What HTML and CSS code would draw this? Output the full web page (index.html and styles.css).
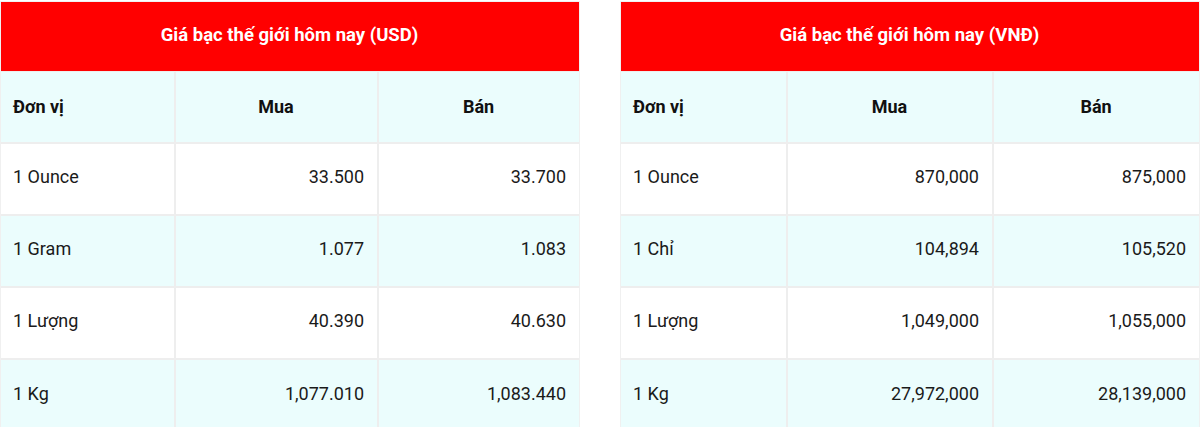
FILE: index.html
```html
<!DOCTYPE html>
<html lang="vi">
<head>
<meta charset="utf-8">
<title>Giá bạc</title>
<link rel="stylesheet" href="styles.css">
</head>
<body>
<div class="wrap">
  <table class="price usd">
    <colgroup><col class="c1"><col class="c2"><col class="c3"></colgroup>
    <thead>
      <tr><th class="title" colspan="3">Giá bạc thế giới hôm nay (USD)</th></tr>
      <tr class="head"><th class="left">Đơn vị</th><th>Mua</th><th class="last">Bán</th></tr>
    </thead>
    <tbody>
      <tr><td>1 Ounce</td><td class="num">33.500</td><td class="num last">33.700</td></tr>
      <tr class="alt"><td>1 Gram</td><td class="num">1.077</td><td class="num last">1.083</td></tr>
      <tr><td>1 Lượng</td><td class="num">40.390</td><td class="num last">40.630</td></tr>
      <tr class="alt"><td>1 Kg</td><td class="num">1,077.010</td><td class="num last">1,083.440</td></tr>
    </tbody>
  </table>
  <table class="price vnd">
    <colgroup><col class="c1"><col class="c2"><col class="c3"></colgroup>
    <thead>
      <tr><th class="title" colspan="3">Giá bạc thế giới hôm nay (VNĐ)</th></tr>
      <tr class="head"><th class="left">Đơn vị</th><th>Mua</th><th class="last">Bán</th></tr>
    </thead>
    <tbody>
      <tr><td>1 Ounce</td><td class="num">870,000</td><td class="num last">875,000</td></tr>
      <tr class="alt"><td>1 Chỉ</td><td class="num">104,894</td><td class="num last">105,520</td></tr>
      <tr><td>1 Lượng</td><td class="num">1,049,000</td><td class="num last">1,055,000</td></tr>
      <tr class="alt"><td>1 Kg</td><td class="num">27,972,000</td><td class="num last">28,139,000</td></tr>
    </tbody>
  </table>
</div>
</body>
</html>
```
FILE: styles.css
```css
* { box-sizing: border-box; }
html, body { margin: 0; padding: 0; background: #fff; }
body {
  font-family: Roboto, "Liberation Sans", Arial, sans-serif;
  font-size: 18px;
  color: #1a1a1a;
}
.wrap {
  display: flex;
  gap: 40px;
  padding-top: 1px;
}
.price {
  width: 580px;
  flex: 0 0 580px;
  border-collapse: separate;
  border-spacing: 0;
  border: 1px solid #f0f0f0;
  table-layout: fixed;
}
.usd .c1 { width: 175px; }
.usd .c2 { width: 203px; }
.usd .c3 { width: 200px; }
.vnd .c1 { width: 167px; }
.vnd .c2 { width: 206px; }
.vnd .c3 { width: 205px; }
.price th, .price td {
  height: 72px;
  padding: 0 13px 5px 12px;
  border-right: 2px solid #eeeeee;
  border-bottom: 2px solid #eeeeee;
  vertical-align: middle;
  font-weight: 400;
}
.price .last { border-right: 0; }
.price tbody tr:last-child td { border-bottom: 0; }
.price th.title {
  height: 70px;
  padding-bottom: 4px;
  background: #ff0000;
  color: #fff;
  font-weight: 700;
  font-size: 18.5px;
  text-align: center;
  border-right: 0;
  border-bottom: 1px solid #eeeeee;
}
.head th {
  background: #ebfdfd;
  font-weight: 700;
  text-align: center;
  color: #111;
  padding-bottom: 2px;
}
.head th.left { text-align: left; }
.alt td { background: #ebfdfd; }
.num { text-align: right; }
```
